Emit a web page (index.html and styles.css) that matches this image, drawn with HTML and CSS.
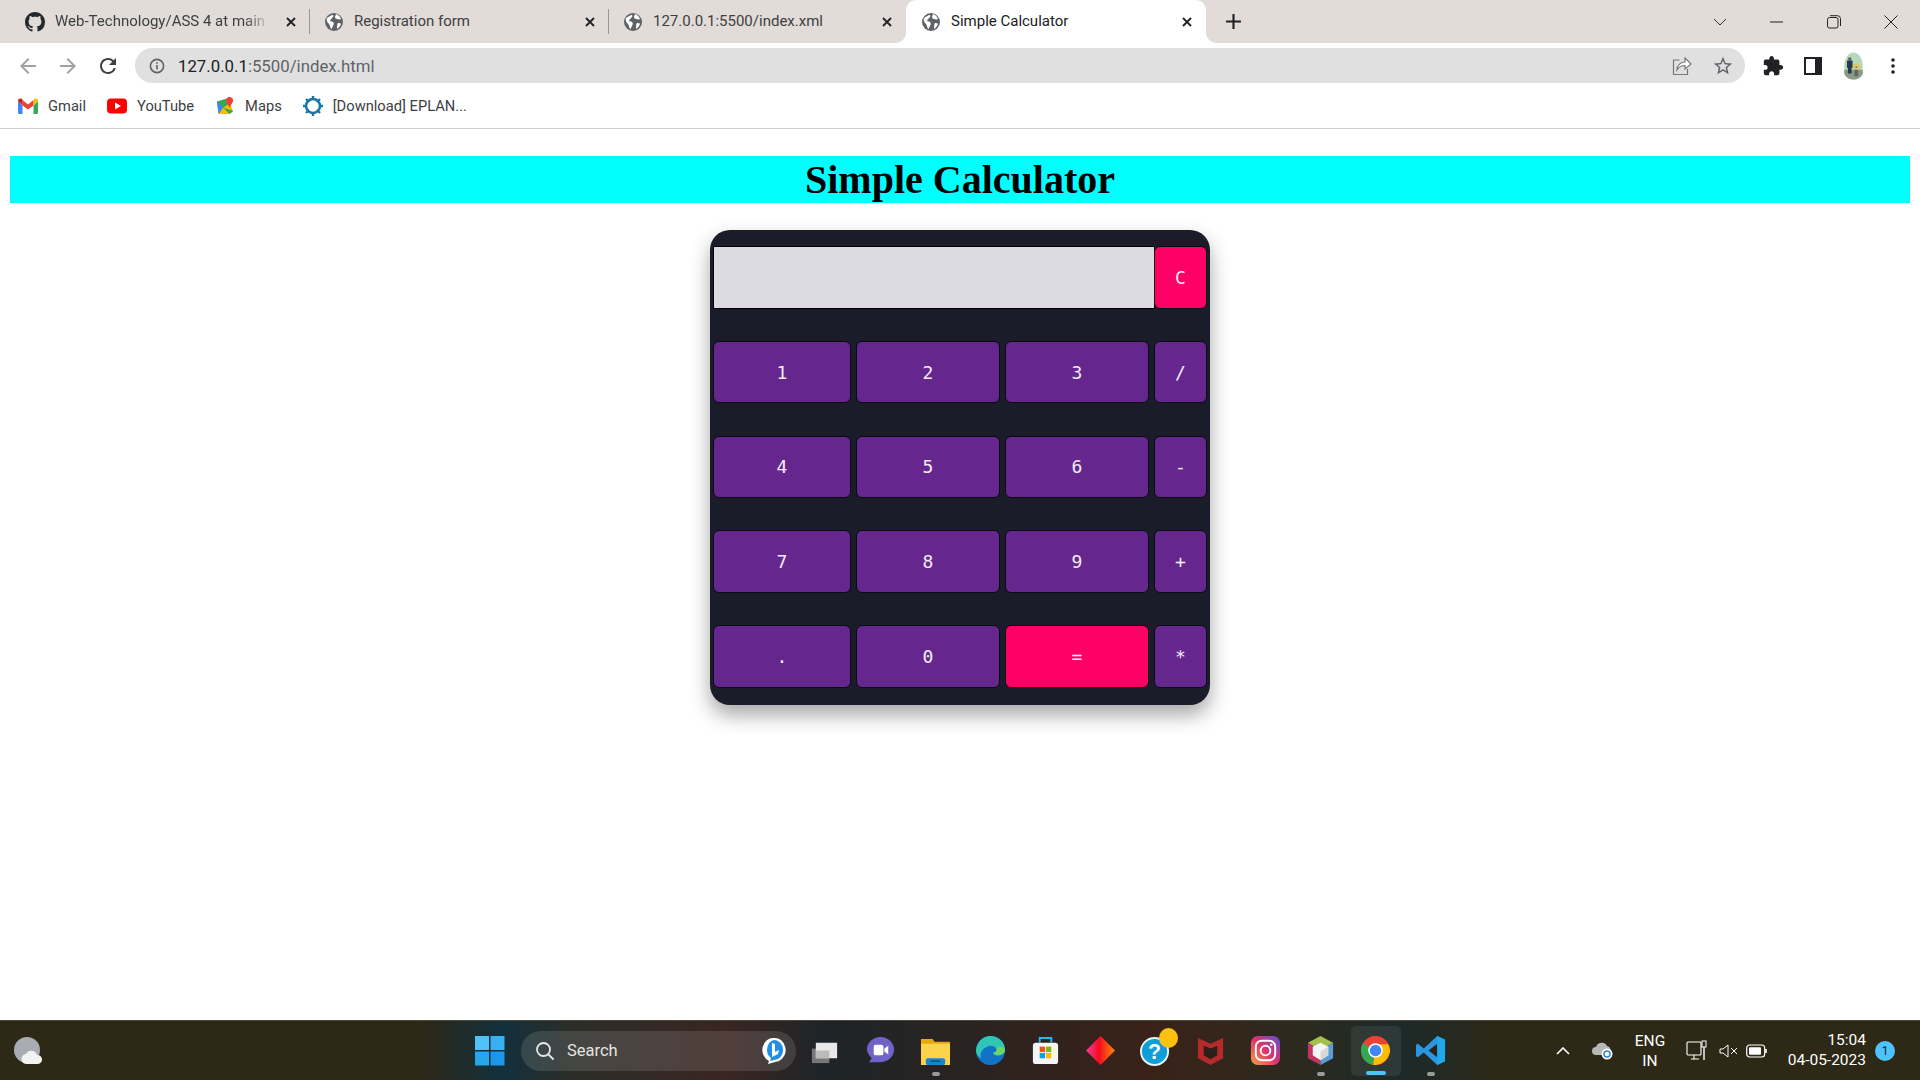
FILE: index.html
```html
<!DOCTYPE html>
<html lang="en">
<head>
    <meta charset="UTF-8">
    <title>Simple Calculator</title>
    <link rel="stylesheet" href="styles.css">
</head>
<body>

<svg class="defs" width="0" height="0">
    <symbol id="globe" viewBox="0 0 20 20">
        <circle cx="10" cy="10" r="9" fill="#5f6368"/>
        <path d="M3 6c2-1 4-3 6-3 1 1 0 2-1 3s-1 2-2 2c0 2 2 1 3 2s1 2 0 4c-1 1-1 3-2 3-1-2-1-4-2-5S2 9 3 6zM12 2c2 1 4 2 5 5-1 1-3 0-4 0s-2-1-2-2 1-2 1-3zM14 11c1 0 3 0 3 1-1 2-2 4-4 5 0-2 0-5 1-6z" fill="#fff"/>
    </symbol>
    <symbol id="close" viewBox="0 0 12 12">
        <path d="M2 2l8 8M10 2l-8 8" stroke="#202124" stroke-width="1.8" fill="none"/>
    </symbol>
</svg>

<div class="tabstrip">
    <div class="tab">
        <svg class="tab-icon" viewBox="0 0 16 16"><path fill="#24292f" d="M8 0C3.58 0 0 3.58 0 8c0 3.54 2.29 6.53 5.47 7.59.4.07.55-.17.55-.38 0-.19-.01-.82-.01-1.49-2.01.37-2.53-.49-2.69-.94-.09-.23-.48-.94-.82-1.13-.28-.15-.68-.52-.01-.53.63-.01 1.08.58 1.23.82.72 1.21 1.87.87 2.33.66.07-.52.28-.87.51-1.07-1.78-.2-3.64-.89-3.64-3.95 0-.87.31-1.59.82-2.15-.08-.2-.36-1.02.08-2.12 0 0 .67-.21 2.2.82.64-.18 1.32-.27 2-.27.68 0 1.36.09 2 .27 1.53-1.04 2.2-.82 2.2-.82.44 1.1.16 1.92.08 2.12.51.56.82 1.27.82 2.15 0 3.07-1.87 3.75-3.65 3.95.29.25.54.73.54 1.48 0 1.07-.01 1.93-.01 2.2 0 .21.15.46.55.38A8.013 8.013 0 0016 8c0-4.42-3.58-8-8-8z"/></svg>
        <span class="tab-title fade">Web-Technology/ASS 4 at main -</span>
        <svg class="tab-close"><use href="#close"/></svg>
    </div>
    <div class="tab">
        <svg class="tab-icon"><use href="#globe"/></svg>
        <span class="tab-title">Registration form</span>
        <svg class="tab-close"><use href="#close"/></svg>
    </div>
    <div class="tab">
        <svg class="tab-icon"><use href="#globe"/></svg>
        <span class="tab-title">127.0.0.1:5500/index.xml</span>
        <svg class="tab-close"><use href="#close"/></svg>
    </div>
    <div class="tab active">
        <svg class="tab-icon"><use href="#globe"/></svg>
        <span class="tab-title">Simple Calculator</span>
        <svg class="tab-close"><use href="#close"/></svg>
    </div>
    <svg class="new-tab" viewBox="0 0 16 16"><path d="M8 1v14M1 8h14" stroke="#202124" stroke-width="2"/></svg>
    <div class="window-btns">
        <svg class="win-btn chevron" viewBox="0 0 14 8"><path d="M1 1l6 6 6-6" stroke="#333" fill="none"/></svg>
        <svg class="win-btn" viewBox="0 0 14 14"><path d="M0 7h13" stroke="#222" stroke-width="1"/></svg>
        <svg class="win-btn" viewBox="0 0 14 14"><rect x=".5" y="2.5" width="10.5" height="10.5" rx="2" fill="none" stroke="#222"/><path d="M3 .7h7.5a3 3 0 013 3V11" fill="none" stroke="#222"/></svg>
        <svg class="win-btn" viewBox="0 0 14 14"><path d="M.5.5l13 13M13.5.5l-13 13" stroke="#222"/></svg>
    </div>
</div>

<div class="toolbar">
    <svg class="nav-btn" viewBox="0 0 24 24"><path fill="#a0a2a5" d="M20 11H7.83l5.59-5.59L12 4l-8 8 8 8 1.41-1.41L7.83 13H20v-2z"/></svg>
    <svg class="nav-btn" viewBox="0 0 24 24"><path fill="#a0a2a5" d="M4 11h12.17l-5.59-5.59L12 4l8 8-8 8-1.41-1.41L16.17 13H4v-2z"/></svg>
    <svg class="nav-btn" viewBox="0 0 24 24"><path fill="#3c4043" d="M17.65 6.35A7.958 7.958 0 0012 4c-4.42 0-7.99 3.58-7.99 8s3.57 8 7.99 8c3.73 0 6.84-2.55 7.73-6h-2.08A5.99 5.99 0 0112 18c-3.31 0-6-2.69-6-6s2.69-6 6-6c1.66 0 3.14.69 4.22 1.78L13 11h7V4l-2.35 2.35z"/></svg>
    <div class="omnibox">
        <svg class="info-icon" viewBox="0 0 16 16"><circle cx="8" cy="8" r="6.6" fill="none" stroke="#5f6368" stroke-width="1.6"/><path d="M8 7v4.5M8 4.3v1.5" stroke="#5f6368" stroke-width="1.6"/></svg>
        <span class="url"><b>127.0.0.1</b>:5500/index.html</span>
        <svg class="omni-icon" viewBox="0 0 20 20"><path d="M7.5 4H1.5v14.5h14V13" fill="none" stroke="#777" stroke-width="1.2"/><path d="M5 14c0-5 4-8 8-8V2l6 6-6 5V9.5c-3 0-6 1-8 4.5z" fill="#fff" stroke="#777" stroke-width="1.2"/></svg>
        <svg class="omni-icon star" viewBox="0 0 24 24"><path fill="#5f6368" d="M22 9.24l-7.19-.62L12 2 9.19 8.63 2 9.24l5.46 4.73L5.82 21 12 17.27 18.18 21l-1.63-7.03L22 9.24zM12 15.4l-3.76 2.27 1-4.28-3.32-2.88 4.38-.38L12 6.1l1.71 4.04 4.38.38-3.32 2.88 1 4.28L12 15.4z"/></svg>
    </div>
    <div class="toolbar-end">
        <svg class="puzzle" viewBox="0 0 24 24"><path fill="#202124" d="M20.5 11H19V7c0-1.1-.9-2-2-2h-4V3.5C13 2.12 11.88 1 10.5 1S8 2.12 8 3.5V5H4c-1.1 0-1.99.9-1.99 2v3.8H3.5c1.49 0 2.7 1.21 2.7 2.7s-1.21 2.7-2.7 2.7H2V20c0 1.1.9 2 2 2h3.8v-1.5c0-1.49 1.21-2.7 2.7-2.7 1.49 0 2.7 1.21 2.7 2.7V22H17c1.1 0 2-.9 2-2v-4h1.5c1.38 0 2.5-1.12 2.5-2.5S21.88 11 20.5 11z"/></svg>
        <svg class="panel" viewBox="0 0 18 18"><rect width="18" height="18" fill="#202124"/><rect x="2" y="2" width="9" height="14" fill="#fff"/></svg>
        <svg class="avatar" viewBox="0 0 20 30">
            <ellipse cx="10" cy="15" rx="10" ry="14.5" fill="#b5d8bd"/>
            <path d="M0 19h20v4c-1 4-6 6.500-10 6.500S1 27 0 23z" fill="#8d9a83"/>
            <rect x="4.500" y="6" width="3" height="3" fill="#6d4c3a"/>
            <path d="M3 9h6v8H8v6H4v-6H3z" fill="#233a52"/>
            <circle cx="13" cy="16" r="3" fill="none" stroke="#e9c535" stroke-width="1.500"/>
            <circle cx="13" cy="16" r="1" fill="#d8422e"/>
            <rect x="11" y="19" width="4" height="7" fill="#5b6670"/>
        </svg>
        <svg class="dots" viewBox="0 0 4 16"><circle cx="2" cy="2" r="1.800" fill="#202124"/><circle cx="2" cy="8" r="1.800" fill="#202124"/><circle cx="2" cy="14" r="1.800" fill="#202124"/></svg>
    </div>
</div>

<div class="bookmarks">
    <div class="bookmark">
        <svg class="bm-icon" viewBox="0 0 20 16"><path d="M0 3v11.500c0 .8.700 1.500 1.500 1.500H4.500V7.500z" fill="#4285f4"/><path d="M20 3v11.500c0 .8-.7 1.500-1.500 1.500H15.500V7.500z" fill="#34a853"/><path d="M4.500 7.500V16h0L4.500 2 10 6.500 15.500 2v5.500L10 11.500z" fill="#ea4335"/><path d="M0 3c0-2.500 2.500-3 4-2l.5 1v5.500z" fill="#c5221f"/><path d="M20 3c0-2.500-2.500-3-4-2l-.5 1v5.500z" fill="#fbbc04"/></svg>
        <span>Gmail</span>
    </div>
    <div class="bookmark">
        <svg class="bm-icon" viewBox="0 0 20 16"><rect width="20" height="15" y=".5" rx="4" fill="#f00"/><path d="M8 4.500v7l6-3.500z" fill="#fff"/></svg>
        <span>YouTube</span>
    </div>
    <div class="bookmark">
        <svg class="bm-icon" viewBox="0 0 20 20"><path d="M1 5l10-3 8 14-4 3H3z" fill="#34a853"/><path d="M1 5l7 7-5 7z" fill="#4285f4"/><path d="M8 12l7 7H3z" fill="#fbbc04"/><path d="M8 12L16 6l2 9z" fill="#fbbc04"/><path d="M15 0c-2.500 0-4 2-4 4 0 2.500 3 5 4 8 1-3 4-5.500 4-8 0-2-1.500-4-4-4z" fill="#ea4335"/></svg>
        <span>Maps</span>
    </div>
    <div class="bookmark">
        <svg class="bm-icon gear" viewBox="0 0 20 20"><circle cx="10" cy="10" r="7" fill="none" stroke="#1a77a8" stroke-width="2.600"/><path d="M10 0v4M10 16v4M0 10h4M16 10h4M3 3l3 3M14 14l3 3M17 3l-3 3M6 14l-3 3" stroke="#1a77a8" stroke-width="2.400"/></svg>
        <span>[Download] EPLAN...</span>
    </div>
</div>

<main class="page">
    <h1 class="page-title">Simple Calculator</h1>
    <div class="calculator">
        <div class="display"></div>
        <button class="key pink">C</button>
        <button class="key">1</button>
        <button class="key">2</button>
        <button class="key">3</button>
        <button class="key">/</button>
        <button class="key">4</button>
        <button class="key">5</button>
        <button class="key">6</button>
        <button class="key">-</button>
        <button class="key">7</button>
        <button class="key">8</button>
        <button class="key">9</button>
        <button class="key">+</button>
        <button class="key">.</button>
        <button class="key">0</button>
        <button class="key pink">=</button>
        <button class="key">*</button>
    </div>
</main>

<footer class="taskbar">
    <svg class="weather" viewBox="0 0 28 28"><circle cx="13" cy="13" r="13" fill="#a9adb3"/><path d="M13 27a5 5 0 01-1-10 6 6 0 0111 1 4.500 4.500 0 011 9z" fill="#f2f2f2"/></svg>
    <svg class="start" viewBox="0 0 30 30"><rect width="14" height="14" fill="#4fc3f7"/><rect x="15.500" width="14" height="14" fill="#39b0f2"/><rect y="15.500" width="14" height="14" fill="#29a5ee"/><rect x="15.500" y="15.500" width="14" height="14" fill="#1d96ea"/></svg>
    <div class="search">
        <svg class="search-icon" viewBox="0 0 20 20"><circle cx="8.500" cy="8.500" r="6.500" fill="none" stroke="#e8e8e8" stroke-width="1.800"/><path d="M13 13l5.500 5.500" stroke="#e8e8e8" stroke-width="1.800"/></svg>
        <span>Search</span>
        <svg class="bing" viewBox="0 0 24 28"><path d="M12 1a11 12 0 015 23L6 27l1-3A11 12 0 0112 1z" fill="#fff"/><path d="M12 3a9 10 0 014 19l-8 2 1-3a9 10 0 013-18z" fill="#1f8fe8"/><path d="M10 6l3 1v8l4-2-1 4-6 3z" fill="#fff"/></svg>
    </div>
    <div class="apps">
        <div class="app"><svg viewBox="0 0 32 32"><rect x="2" y="14" width="18" height="15" fill="#777"/><rect x="6" y="8" width="22" height="16" fill="#e8e8e8"/><rect x="6" y="16" width="14" height="8" fill="#bbb"/></svg></div>
        <div class="app"><svg viewBox="0 0 32 32"><path d="M16 2c8 0 14 6 14 13s-6 13-14 13H4l3-4c-3-3-5-6-5-9C2 8 8 2 16 2z" fill="#6f63c8"/><rect x="9" y="10" width="10" height="11" rx="2" fill="#fff"/><path d="M20 14l4-3v9l-4-3z" fill="#fff"/></svg></div>
        <div class="app dot"><svg viewBox="0 0 32 32"><path d="M1 4h12l2 3h16v24H1z" fill="#e7a90d"/><path d="M1 9h30v22H1z" fill="#fcd34d"/><rect x="6" y="24" width="20" height="7" rx="2" fill="#1785cf"/><path d="M11 27h10" stroke="#0b4f86" stroke-width="1.500"/></svg></div>
        <div class="app"><svg viewBox="0 0 32 32"><circle cx="16" cy="16" r="15" fill="#1173c7"/><path d="M1 16C2 6 9 1 16 1c8 0 15 6 15 14 0 4-3 6-7 6-3 0-5-1-5-3 3 0 4-2 3-4-2-3-7-4-11-1-4 2-6 6-5 11-3-2-5-5-5-8z" fill="#30c6b4"/><path d="M31 15c0 3-3 6-7 6-3 0-5-1-5-3 3 0 4-2 3-4 3-3 7-2 9 1z" fill="#69d66b"/></svg></div>
        <div class="app"><svg viewBox="0 0 32 32"><rect x="3" y="8" width="26" height="22" rx="3" fill="#f5f5f5"/><path d="M10 8V3h12v5" fill="none" stroke="#29b6e8" stroke-width="2"/><rect x="10" y="12" width="5.500" height="5.500" fill="#f25022"/><rect x="16.500" y="12" width="5.500" height="5.500" fill="#7fba00"/><rect x="10" y="18.500" width="5.500" height="5.500" fill="#00a4ef"/><rect x="16.500" y="18.500" width="5.500" height="5.500" fill="#ffb900"/></svg></div>
        <div class="app"><svg viewBox="0 0 32 32"><defs><linearGradient id="dia"><stop offset="0" stop-color="#ee3fa0"/><stop offset=".45" stop-color="#f60a1f"/><stop offset="1" stop-color="#f98e04"/></linearGradient></defs><path d="M16 1l15 15-15 15L1 16z" fill="url(#dia)"/></svg></div>
        <div class="app help"><svg viewBox="0 0 32 32"><circle cx="15" cy="17" r="14" fill="#0e9fd8" stroke="#e6f4fa" stroke-width="2"/><text x="15" y="25" class="help-mark">?</text></svg><span class="help-badge"></span></div>
        <div class="app"><svg viewBox="0 0 32 32"><path d="M3 3l13 6 13-6v21l-13 7-13-7z" fill="#b52a2a"/><path d="M9 11l7 3 7-3v10l-7 4-7-4z" fill="#2b2118"/></svg></div>
        <div class="app"><svg viewBox="0 0 32 32"><defs><linearGradient id="insta" x1="0" y1="1" x2="1" y2="0"><stop offset="0" stop-color="#f9a23b"/><stop offset=".5" stop-color="#e1306c"/><stop offset="1" stop-color="#5b51d8"/></linearGradient></defs><rect x="1" y="1" width="30" height="30" rx="7" fill="url(#insta)"/><rect x="6" y="6" width="20" height="20" rx="6" fill="none" stroke="#fff" stroke-width="2"/><circle cx="16" cy="16" r="5" fill="none" stroke="#fff" stroke-width="2"/><circle cx="22" cy="10" r="1.300" fill="#fff"/></svg></div>
        <div class="app dot"><svg viewBox="0 0 32 32"><path d="M16 1l13 7-13 8L3 8z" fill="#a4bf4a"/><path d="M3 8l13 8v15L3 24z" fill="#c2335f"/><path d="M29 8L16 16v15l13-7z" fill="#5b9bd5"/><path d="M16 8l8 4v9l-8 5-8-5v-9z" fill="#f4f4f4"/><path d="M16 17l8-5v9l-8 5z" fill="#d8d8d8"/></svg></div>
        <div class="app current"><svg viewBox="0 0 32 32"><circle cx="16" cy="16" r="15" fill="#ea4335"/><path d="M16 16L3 8.500A15 15 0 001 16a15 15 0 0012.500 14.800z" fill="#34a853"/><path d="M16 16h14.500A15 15 0 0116 31h-2.500z" fill="#fbbc04"/><path d="M16 9.500h13A15 15 0 0131 16c0 1-.1 2-.3 3L16 16z" fill="#fbbc04"/><circle cx="16" cy="16" r="7.500" fill="#fff"/><circle cx="16" cy="16" r="6" fill="#4285f4"/></svg></div>
        <div class="app dot"><svg viewBox="0 0 32 32"><path d="M23 1l8 4v22l-8 4L9 18l-6 5-2-1V10l2-1 6 5z" fill="#2a97e0"/><path d="M23 9v14l-9-7z" fill="#2b2118"/><path d="M23 1l8 4v22l-8 4z" fill="#1fa8ee"/></svg></div>
    </div>
    <div class="tray">
        <svg class="tray-chevron" viewBox="0 0 14 8"><path d="M1 7l6-6 6 6" fill="none" stroke="#fff" stroke-width="1.600"/></svg>
        <svg class="tray-cloud" viewBox="0 0 22 18"><path d="M4 13a4 4 0 010-8 6 6 0 0111-1 4 4 0 013 6v3z" fill="#b7b7b7"/><circle cx="15" cy="12" r="5.500" fill="#fff"/><circle cx="15" cy="12" r="3" fill="none" stroke="#2f86d8" stroke-width="1.500"/></svg>
        <div class="lang"><span>ENG</span><span>IN</span></div>
        <svg class="tray-net" viewBox="0 0 22 22"><rect x="1" y="2" width="14" height="13" rx="1" fill="none" stroke="#fff" stroke-width="1.100"/><path d="M5 19h8M8 15v4" stroke="#fff" stroke-width="1.100"/><rect x="16" y="1" width="4" height="6" fill="#2b2718" stroke="#fff"/><path d="M18 7v13" stroke="#fff" stroke-width="1.400"/></svg>
        <svg class="tray-sound" viewBox="0 0 20 14"><path d="M1 5h3l5-4v12L4 9H1z" fill="none" stroke="#fff"/><path d="M12 4l6 6M18 4l-6 6" stroke="#fff"/></svg>
        <svg class="tray-battery" viewBox="0 0 22 14"><rect x=".7" y="1" width="18" height="12" rx="3" fill="none" stroke="#fff" stroke-width="1.200"/><rect x="3" y="3.300" width="12" height="7.400" rx="1" fill="#fff"/><path d="M20 5v4" stroke="#fff" stroke-width="1.600"/></svg>
        <div class="clock"><span>15:04</span><span>04-05-2023</span></div>
        <span class="notif">1</span>
    </div>
</footer>

</body>
</html>
```

FILE: styles.css
```css
* {
    box-sizing: border-box;
}
body {
    margin: 0;
    height: 100vh;
    display: flex;
    flex-direction: column;
    overflow: hidden;
    background: #fff;
    font-family: Roboto, "Liberation Sans", sans-serif;
}
.defs {
    position: absolute;
}

/* browser tabs */
.tabstrip {
    height: 43px;
    display: flex;
    align-items: center;
    padding-left: 11px;
    background: #e3dbd8;
}
.tab {
    position: relative;
    width: 299px;
    height: 43px;
    display: flex;
    align-items: center;
    padding: 0 13px 0 14px;
    font-size: 15px;
    color: #3c4043;
}
.tab:nth-child(1)::after, .tab:nth-child(2)::after {
    content: "";
    position: absolute;
    right: 0;
    top: 9px;
    height: 25px;
    border-right: 1px solid #9a9696;
}
.tab:nth-child(3) {
    width: 297px;
}
.tab.active {
    width: 300px;
    background: #fff;
    border-radius: 10px 10px 0 0;
    color: #202124;
    padding-left: 15px;
}
.tab.active::before, .tab.active::after {
    content: "";
    position: absolute;
    bottom: 0;
    width: 10px;
    height: 10px;
}
.tab.active::before {
    left: -10px;
    background: radial-gradient(circle at 0 0, #e3dbd8 9.5px, #fff 10px);
}
.tab.active::after {
    right: -10px;
    background: radial-gradient(circle at 100% 0, #e3dbd8 9.5px, #fff 10px);
}
.tab-icon {
    width: 20px;
    height: 20px;
    margin-right: 10px;
    flex: none;
}
.tab-title {
    flex: 1;
    margin-top: -2px;
    white-space: nowrap;
    overflow: hidden;
}
.tab-title.fade {
    -webkit-mask-image: linear-gradient(to right, #000 190px, transparent 215px);
}
.tab-close {
    width: 12px;
    height: 12px;
    flex: none;
}
.new-tab {
    width: 17px;
    height: 17px;
    margin-left: 19px;
}
.window-btns {
    margin-left: auto;
    display: flex;
    align-items: center;
    gap: 43px;
    padding-right: 22px;
}
.win-btn {
    width: 14px;
    height: 14px;
}

/* address bar */
.toolbar {
    height: 45px;
    display: flex;
    align-items: center;
    padding: 0 0 0 16px;
}
.nav-btn {
    width: 24px;
    height: 24px;
    margin-right: 16px;
}
.nav-btn:nth-child(3) {
    margin-right: 15px;
}
.omnibox {
    width: 1610px;
    height: 35px;
    display: flex;
    align-items: center;
    padding: 0 11px 0 14px;
    background: #e0e0e0;
    border-radius: 18px;
}
.info-icon {
    width: 16px;
    height: 16px;
    margin-right: 13px;
}
.url {
    flex: 1;
    font-size: 16.800px;
    color: #5f6368;
}
.url b {
    font-weight: 400;
    color: #202124;
}
.omni-icon {
    width: 20px;
    height: 20px;
    margin-right: 20px;
}
.omni-icon.star {
    width: 22px;
    height: 22px;
    margin-right: 0;
}
.toolbar-end {
    display: flex;
    align-items: center;
    padding-left: 17px;
}
.puzzle {
    width: 22px;
    height: 22px;
    margin-right: 20px;
}
.panel {
    width: 18px;
    height: 18px;
    margin-right: 22px;
}
.avatar {
    width: 19px;
    height: 28px;
    margin-right: 28px;
}
.dots {
    width: 4px;
    height: 16px;
}

/* bookmarks */
.bookmarks {
    height: 41px;
    display: flex;
    align-items: center;
    padding: 0 0 4px 18px;
    border-bottom: 1px solid #cfcfcf;
    font-size: 14.700px;
    color: #3c4043;
}
.bookmark {
    display: flex;
    align-items: center;
    margin-right: 21px;
}
.bm-icon {
    width: 20px;
    height: 18px;
    margin-right: 10px;
}
.bm-icon.gear {
    height: 20px;
}

/* calculator */
.page {
    flex: 1;
    min-height: 0;
    padding: 27px 10px 0;
}
.page-title {
    height: 47px;
    margin: 0 0 27px;
    background: #0ff;
    color: #000;
    font: bold 40px/47px "Liberation Serif", serif;
    text-align: center;
}
.calculator {
    width: 500px;
    margin: 0 auto;
    display: grid;
    grid-template-columns: 138px 144px 144px 53px;
    grid-auto-rows: 62.500px;
    column-gap: 5px;
    row-gap: 32.250px;
    padding: 16px 3px 17.500px;
    background: #1a1c2a;
    border-radius: 20px;
    box-shadow: 0 10px 20px rgba(0, 0, 0, 0.35);
}
.display {
    grid-column: span 3;
    margin-right: -6px;
    background: #dcdbe1;
    border: 1px solid #000;
}
.key {
    position: relative;
    padding: 0;
    border: 1px solid #0b0a12;
    border-radius: 6px;
    background: #65278d;
    color: #f4eef8;
    font: 18px "DejaVu Sans Mono", monospace;
}
.key.pink {
    background: #ff0066;
}

/* windows taskbar */
.taskbar {
    height: 60px;
    display: flex;
    align-items: center;
    padding-left: 14px;
    border-top: 1px solid #4a4638;
    color: #fff;
    background: linear-gradient(to right, #2e2817 0, #2e2817 22%, #12303c 26%, #2c2d28 30%, #3a2522 38%, #1e2428 43%, #3a2218 60%, #2b2a1e 68%, #1c2a2a 73%, #2e2817 78%);
}
.weather {
    width: 28px;
    height: 28px;
}
.start {
    width: 30px;
    height: 30px;
    margin-left: 433px;
}
.search {
    width: 275px;
    height: 40px;
    margin-left: 16px;
    display: flex;
    align-items: center;
    padding: 0 5px 0 14px;
    border-radius: 20px;
    background: rgba(255, 255, 255, 0.12);
    font-size: 16.500px;
    color: #e4e4e4;
}
.search-icon {
    width: 20px;
    height: 20px;
    margin-right: 12px;
}
.search span {
    flex: 1;
}
.bing {
    width: 24px;
    height: 28px;
    margin-right: 5px;
}
.apps {
    display: flex;
    margin-left: 2px;
}
.app {
    position: relative;
    width: 55px;
    height: 50px;
    display: flex;
    align-items: center;
    justify-content: center;
}
.app svg {
    width: 31px;
    height: 31px;
}
.app.dot::after {
    content: "";
    position: absolute;
    left: 24px;
    bottom: 0;
    width: 8px;
    height: 4px;
    border-radius: 2px;
    background: #9a9a9a;
}
.app.current {
    width: 50px;
    margin: 0 2.500px;
    border-radius: 5px;
    background: rgba(255, 255, 255, 0.07);
}
.app.current::after {
    content: "";
    position: absolute;
    left: 15px;
    bottom: 1px;
    width: 20px;
    height: 4px;
    border-radius: 2px;
    background: #4cc2ff;
}
.help-mark {
    font: bold 22px "Liberation Sans", sans-serif;
    fill: #fff;
    text-anchor: middle;
}
.help-badge {
    position: absolute;
    top: 2px;
    left: 31px;
    width: 19px;
    height: 20px;
    border-radius: 50%;
    background: #fec10d;
}
.tray {
    margin-left: auto;
    display: flex;
    align-items: center;
    padding-right: 25px;
}
.tray-chevron {
    width: 14px;
    height: 8px;
    margin-right: 22px;
}
.tray-cloud {
    width: 22px;
    height: 18px;
    margin-right: 20px;
}
.lang, .clock {
    display: flex;
    flex-direction: column;
    font-size: 15.500px;
    line-height: 20px;
    text-align: center;
}
.lang {
    width: 32px;
    margin-right: 20px;
}
.tray-net {
    width: 22px;
    height: 22px;
    margin-right: 11px;
}
.tray-sound {
    width: 20px;
    height: 14px;
    margin-right: 7px;
}
.tray-battery {
    width: 22px;
    height: 14px;
    margin-right: 12px;
}
.clock {
    width: 86px;
    margin-top: -2px;
    margin-right: 9px;
    text-align: right;
}
.notif {
    width: 20px;
    height: 20px;
    border-radius: 50%;
    background: #4cc2ff;
    color: #10222c;
    font-size: 12px;
    line-height: 20px;
    text-align: center;
}
```
